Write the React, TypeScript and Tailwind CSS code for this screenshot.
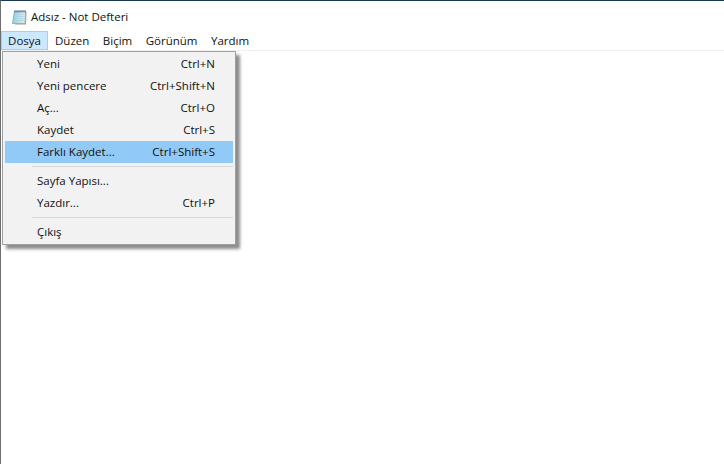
const menus = ['Düzen', 'Biçim', 'Görünüm', 'Yardım'];

const items = [
  { label: 'Yeni', shortcut: 'Ctrl+N' },
  { label: 'Yeni pencere', shortcut: 'Ctrl+Shift+N' },
  { label: 'Aç...', shortcut: 'Ctrl+O' },
  { label: 'Kaydet', shortcut: 'Ctrl+S' },
  { label: 'Farklı Kaydet...', shortcut: 'Ctrl+Shift+S', active: true },
  { separator: true },
  { label: 'Sayfa Yapısı...' },
  { label: 'Yazdır...', shortcut: 'Ctrl+P' },
  { separator: true },
  { label: 'Çıkış' },
];

function NotepadIcon() {
  return (
    <svg width="16" height="16" viewBox="0 0 16 16" className="shrink-0">
      <defs>
        <linearGradient id="paper" x1="0" y1="0" x2="1" y2="0">
          <stop offset="0" stopColor="#8fd0df" />
          <stop offset="1" stopColor="#e4f3f8" />
        </linearGradient>
      </defs>
      <path d="M4 15.5 L15 15.5 L15.5 3 L14.5 3 L14 14.5 L4 14.5 Z" fill="#a89a78" />
      <path d="M3.5 2 L14.5 2 L14 14.5 L1.5 14.5 Z" fill="url(#paper)" stroke="#8aa4ae" strokeWidth="0.8" />
      <path d="M4 5.5 L13.5 5.5 M3.7 7.5 L13.5 7.5 M3.3 9.5 L13.4 9.5 M3 11.5 L13.3 11.5" stroke="#a7d3e0" strokeWidth="0.8" />
      <path d="M3.5 2.5 L14.5 2.5" stroke="#4a5f6a" strokeWidth="2" strokeDasharray="1 1" />
    </svg>
  );
}

export default function App() {
  return (
    <div className="relative flex h-[464px] w-[724px] flex-col overflow-hidden border-t border-l border-t-[#1b3a50] border-l-[#6e6e6e] bg-white font-['Open_Sans',sans-serif] text-[11.5px] text-[#111111]">
      <div className="flex h-[30px] items-center gap-[4px] pl-[10px] pt-[1px]">
        <NotepadIcon />
        <span>Adsız - Not Defteri</span>
      </div>
      <div className="flex h-[20px] items-stretch border-b border-[#f0f0f0]">
        <div className="flex w-[47px] items-center justify-center border border-[#99d1ff] bg-[#cce8ff]">Dosya</div>
        <div className="flex items-center gap-[13.5px] pl-[7px]">
          {menus.map((menu) => (
            <span key={menu}>{menu}</span>
          ))}
        </div>
      </div>

      <div className="absolute left-[1px] top-[50px] w-[234px] border border-[#a0a0a0] bg-[#f2f2f2] py-[1px] pl-[2px] pr-[2px] shadow-[4px_4px_3px_rgba(0,0,0,0.45)]">
        {items.map((item, i) =>
          item.separator ? (
            <div key={i} className="flex h-[7px] items-center pl-[27px]">
              <div className="h-px w-full bg-[#d7d7d7]" />
            </div>
          ) : (
            <div
              key={i}
              className={`flex h-[22px] items-center justify-between pl-[32px] pr-[18px] ${item.active ? 'bg-[#91c9f7]' : ''}`}
            >
              <span>{item.label}</span>
              {item.shortcut && <span>{item.shortcut}</span>}
            </div>
          ),
        )}
      </div>
    </div>
  );
}
